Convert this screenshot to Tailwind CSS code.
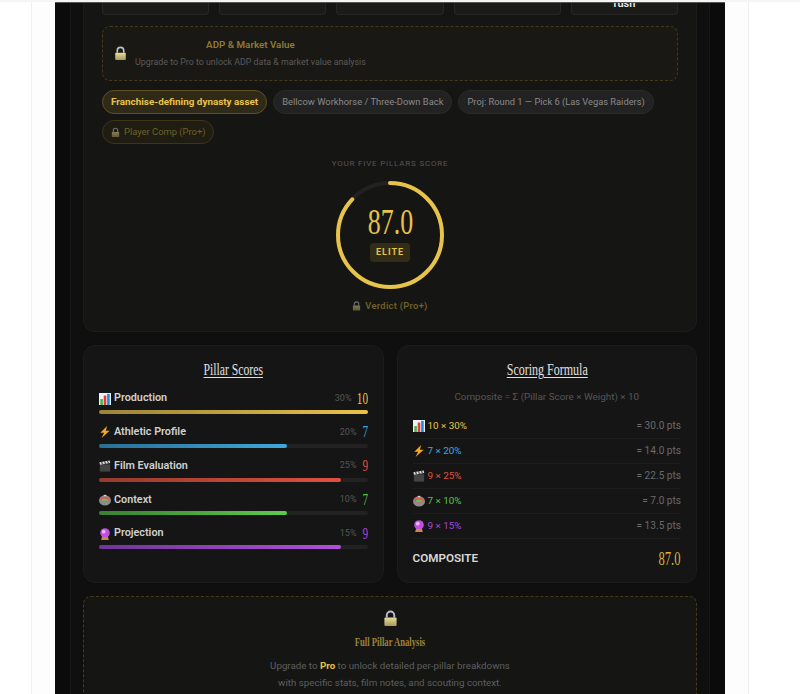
<!DOCTYPE html>
<html lang="en">
  <head>
    <meta charset="UTF-8" />
    <title>Five Pillars Score</title>
    <script src="https://cdn.jsdelivr.net/npm/@tailwindcss/browser@4"></script>
  </head>
  <body class="bg-white font-['Roboto','Liberation_Sans',sans-serif] overflow-hidden">
    <svg class="absolute h-0 w-0">
      <defs>
        <linearGradient id="lockBody" x1="0" y1="0" x2="0" y2="1">
          <stop offset="0" stop-color="#e8dc9c" />
          <stop offset="1" stop-color="#a89a58" />
        </linearGradient>
        <symbol id="lock" viewBox="0 0 16 18">
          <path d="M4 8V5.5a4 4 0 0 1 8 0V8" fill="none" stroke="#b9c2cc" stroke-width="2" />
          <rect x="1.5" y="8" width="13" height="9" rx="1" fill="url(#lockBody)" />
        </symbol>
        <symbol id="chart" viewBox="0 0 14 14">
          <rect width="14" height="14" fill="#eef2f5" />
          <rect x="1.5" y="7" width="3" height="7" fill="#4caf50" />
          <rect x="5.5" y="3" width="3" height="11" fill="#e53935" />
          <rect x="9.5" y="1" width="3" height="13" fill="#1e88e5" />
        </symbol>
        <symbol id="bolt" viewBox="0 0 14 14">
          <path d="M9.5 0 1.5 8h4.5l-3 6 9.5-8.5H8z" fill="#f5a623" />
        </symbol>
        <symbol id="clapper" viewBox="0 0 14 14">
          <rect x="1" y="5" width="12" height="8.5" fill="#444" />
          <path d="m0.5 2.5 12-2 .6 3-12 2z" fill="#ddd" />
          <path d="m3 2 1 3M6.5 1.5l1 3M10 1l1 3" stroke="#333" stroke-width="1.2" />
        </symbol>
        <symbol id="stadium" viewBox="0 0 14 14">
          <ellipse cx="7" cy="7.5" rx="7" ry="6" fill="#8d8d8d" />
          <ellipse cx="7" cy="6" rx="5.4" ry="2.8" fill="#e05a4e" />
          <ellipse cx="7" cy="7" rx="3.8" ry="1.5" fill="#66bb6a" />
          <rect x="5.5" y="1" width="3" height="1.5" fill="#d8d8d8" />
        </symbol>
        <symbol id="ball" viewBox="0 0 14 14">
          <circle cx="7" cy="5.8" r="5.6" fill="#c04fdc" />
          <circle cx="5.5" cy="4.3" r="2.2" fill="#eeb0ff" />
          <path d="M3.5 10.5h7l1 3.5h-9z" fill="#c98a3a" />
        </symbol>
      </defs>
    </svg>

    <!-- outer page -->
    <div class="h-[694px] overflow-hidden border-t-2 border-[#f5f5f5] pl-[31px]">
      <div class="h-full w-[718px] border-x border-[#efefef] bg-[#fdfdfd] px-[23px]">
        <!-- dark frame -->
        <div class="h-full w-[670px] border-t border-[#555] bg-[#0b0b0b] px-[15px]">
          <div class="h-full border-x border-[#171717] bg-[#0f0f0f] px-[12px]">
            <div class="w-[614px]">
              <!-- score card -->
              <div class="h-[329px] rounded-b-xl border border-t-0 border-[#1c1c1c] bg-[#151514] px-[18px]">
                <div class="grid grid-cols-5 gap-[10px]">
                  <div class="h-[12px] rounded-b border border-t-0 border-[#272727] bg-[#1b1b1a]"></div>
                  <div class="h-[12px] rounded-b border border-t-0 border-[#272727] bg-[#1b1b1a]"></div>
                  <div class="h-[12px] rounded-b border border-t-0 border-[#272727] bg-[#1b1b1a]"></div>
                  <div class="h-[12px] rounded-b border border-t-0 border-[#272727] bg-[#1b1b1a]"></div>
                  <div class="h-[12px] overflow-hidden rounded-b border border-t-0 border-[#272727] bg-[#1b1b1a] text-center text-[11px] leading-[2px] font-semibold text-[#e8e8e8]">rush</div>
                </div>

                <!-- ADP lock -->
                <div class="mt-[11px] flex h-[55px] items-center rounded-lg border border-dashed border-[#443a1b] bg-[#191814] pl-[11px]">
                  <svg class="h-[15px] w-[13px] shrink-0"><use href="#lock" /></svg>
                  <div class="ml-[8px] text-center">
                    <div class="text-[9.8px] leading-4 font-semibold text-[#8f7a34]">ADP &amp; Market Value</div>
                    <div class="mt-px text-[8.85px] leading-4 text-[#5a5a5a]">Upgrade to Pro to unlock ADP data &amp; market value analysis</div>
                  </div>
                </div>

                <!-- tags -->
                <div class="mt-[9px] flex flex-wrap gap-x-[6px] gap-y-[6px] text-[9.4px] leading-[22px]">
                  <span class="rounded-full border border-[#5e5022] bg-[#2f2a18] px-2 text-[9.9px] font-bold text-[#e8c34a]">Franchise-defining dynasty asset</span>
                  <span class="rounded-full border border-[#2a2a2a] bg-[#222] px-2 text-[#8a8a8a]">Bellcow Workhorse / Three-Down Back</span>
                  <span class="rounded-full border border-[#2a2a2a] bg-[#222] px-2 text-[9.3px] text-[#8a8a8a]">Proj: Round 1 — Pick 6 (Las Vegas Raiders)</span>
                  <span class="flex items-center gap-1 rounded-full border border-[#3d3518] bg-[#1f1c12] px-2 text-[#6f6128]">
                    <svg class="h-[11px] w-[9px] opacity-50"><use href="#lock" /></svg>Player Comp (Pro+)
                  </span>
                </div>

                <!-- ring -->
                <div class="mt-[14px] text-center text-[8px] leading-3 tracking-[0.8px] text-[#555]">YOUR FIVE PILLARS SCORE</div>
                <div class="relative mx-auto mt-[11px] h-[108px] w-[108px]">
                  <svg class="absolute inset-0 -rotate-90" viewBox="0 0 108 108">
                    <circle cx="54" cy="54" r="52" fill="none" stroke="#222" stroke-width="4" />
                    <circle cx="54" cy="54" r="52" fill="none" stroke="#e8c34a" stroke-width="4" stroke-linecap="round" stroke-dasharray="284 327" />
                  </svg>
                  <div class="absolute inset-0 flex flex-col items-center pt-[21px]">
                    <div class="scale-x-[0.72] font-['Liberation_Serif',serif] text-[36px] leading-10 text-[#e8c34a]">87.0</div>
                    <div class="mt-[1px] rounded-sm bg-[#332c16] px-[6px] text-[9px] leading-[19px] font-bold tracking-[1px] text-[#e8c34a]">ELITE</div>
                  </div>
                </div>
                <div class="mt-[11px] flex items-center justify-center gap-1 text-[9.3px] leading-3 font-semibold tracking-[0.3px] text-[#6f6128]">
                  <svg class="h-[10px] w-[9px] opacity-50"><use href="#lock" /></svg>Verdict (Pro+)
                </div>
              </div>

              <!-- two columns -->
              <div class="mt-[13px] grid h-[238px] grid-cols-2 gap-[13px]">
                <div class="rounded-xl border border-[#1c1c1c] bg-[#151515] px-[15px]">
                  <h3 class="mt-[14px] scale-x-[0.73] text-center font-['Liberation_Serif',serif] text-[16px] leading-5 text-[#e0e0e0] underline underline-offset-2">Pillar Scores</h3>
                  <div class="mt-[9px] flex flex-col gap-[8.75px]">
                    <div>
                      <div class="flex h-[19px] items-center text-[10.8px] font-semibold text-[#d0d0d0]">
                        <svg class="mr-[3px] h-[12px] w-[12px]"><use href="#chart" /></svg>Production
                        <span class="ml-auto text-[9px] font-normal text-[#555]">30%</span>
                        <span class="w-[16px] origin-right scale-x-[0.7] text-right font-['Liberation_Serif',serif] text-[16px] font-normal text-[#e8c34a]">10</span>
                      </div>
                      <div class="mt-[2px] h-[4px] rounded-full bg-[#222]"><div class="h-full rounded-full bg-gradient-to-r from-[#9c8338] to-[#e8c34a]" style="width: 100%"></div></div>
                    </div>
                    <div>
                      <div class="flex h-[19px] items-center text-[10.8px] font-semibold text-[#d0d0d0]">
                        <svg class="mr-[3px] h-[12px] w-[12px]"><use href="#bolt" /></svg>Athletic Profile
                        <span class="ml-auto text-[9px] font-normal text-[#555]">20%</span>
                        <span class="ml-[3px] w-[8px] origin-right scale-x-[0.7] text-right font-['Liberation_Serif',serif] text-[16px] font-normal text-[#3ea8dc]">7</span>
                      </div>
                      <div class="mt-[2px] h-[4px] rounded-full bg-[#222]"><div class="h-full rounded-full bg-gradient-to-r from-[#2a6f94] to-[#3ea8dc]" style="width: 70%"></div></div>
                    </div>
                    <div>
                      <div class="flex h-[19px] items-center text-[10.8px] font-semibold text-[#d0d0d0]">
                        <svg class="mr-[3px] h-[12px] w-[12px]"><use href="#clapper" /></svg>Film Evaluation
                        <span class="ml-auto text-[9px] font-normal text-[#555]">25%</span>
                        <span class="ml-[3px] w-[8px] origin-right scale-x-[0.7] text-right font-['Liberation_Serif',serif] text-[16px] font-normal text-[#e0503f]">9</span>
                      </div>
                      <div class="mt-[2px] h-[4px] rounded-full bg-[#222]"><div class="h-full rounded-full bg-gradient-to-r from-[#96392e] to-[#e0503f]" style="width: 90%"></div></div>
                    </div>
                    <div>
                      <div class="flex h-[19px] items-center text-[10.8px] font-semibold text-[#d0d0d0]">
                        <svg class="mr-[3px] h-[12px] w-[12px]"><use href="#stadium" /></svg>Context
                        <span class="ml-auto text-[9px] font-normal text-[#555]">10%</span>
                        <span class="ml-[3px] w-[8px] origin-right scale-x-[0.7] text-right font-['Liberation_Serif',serif] text-[16px] font-normal text-[#55c244]">7</span>
                      </div>
                      <div class="mt-[2px] h-[4px] rounded-full bg-[#222]"><div class="h-full rounded-full bg-gradient-to-r from-[#3a8030] to-[#5ccc4c]" style="width: 70%"></div></div>
                    </div>
                    <div>
                      <div class="flex h-[19px] items-center text-[10.8px] font-semibold text-[#d0d0d0]">
                        <svg class="mr-[3px] h-[12px] w-[12px]"><use href="#ball" /></svg>Projection
                        <span class="ml-auto text-[9px] font-normal text-[#555]">15%</span>
                        <span class="ml-[3px] w-[8px] origin-right scale-x-[0.7] text-right font-['Liberation_Serif',serif] text-[16px] font-normal text-[#a845d8]">9</span>
                      </div>
                      <div class="mt-[2px] h-[4px] rounded-full bg-[#222]"><div class="h-full rounded-full bg-gradient-to-r from-[#71359a] to-[#b14fdc]" style="width: 90%"></div></div>
                    </div>
                  </div>
                </div>

                <div class="rounded-xl border border-[#1c1c1c] bg-[#151515] px-[15px]">
                  <h3 class="mt-[14px] scale-x-[0.75] text-center font-['Liberation_Serif',serif] text-[16px] leading-5 text-[#e0e0e0] underline underline-offset-2">Scoring Formula</h3>
                  <div class="mt-[9px] text-center text-[9.9px] leading-4 text-[#555]">Composite = Σ (Pillar Score × Weight) × 10</div>
                  <div class="mt-[9px] text-[9.9px]">
                    <div class="flex h-[25px] items-center border-b border-[#1d1d1d]">
                      <svg class="mr-[3px] h-[12px] w-[12px]"><use href="#chart" /></svg><span class="text-[#e8c34a]">10 × 30%</span>
                      <span class="ml-auto text-[10.1px] text-[#6a6a6a]">= 30.0 pts</span>
                    </div>
                    <div class="flex h-[25px] items-center border-b border-[#1d1d1d]">
                      <svg class="mr-[3px] h-[12px] w-[12px]"><use href="#bolt" /></svg><span class="text-[#3ea8dc]">7 × 20%</span>
                      <span class="ml-auto text-[10.1px] text-[#6a6a6a]">= 14.0 pts</span>
                    </div>
                    <div class="flex h-[25px] items-center border-b border-[#1d1d1d]">
                      <svg class="mr-[3px] h-[12px] w-[12px]"><use href="#clapper" /></svg><span class="text-[#e0503f]">9 × 25%</span>
                      <span class="ml-auto text-[10.1px] text-[#6a6a6a]">= 22.5 pts</span>
                    </div>
                    <div class="flex h-[25px] items-center border-b border-[#1d1d1d]">
                      <svg class="mr-[3px] h-[12px] w-[12px]"><use href="#stadium" /></svg><span class="text-[#55c244]">7 × 10%</span>
                      <span class="ml-auto text-[10.1px] text-[#6a6a6a]">= 7.0 pts</span>
                    </div>
                    <div class="flex h-[25px] items-center border-b border-[#1d1d1d]">
                      <svg class="mr-[3px] h-[12px] w-[12px]"><use href="#ball" /></svg><span class="text-[#a845d8]">9 × 15%</span>
                      <span class="ml-auto text-[10.1px] text-[#6a6a6a]">= 13.5 pts</span>
                    </div>
                  </div>
                  <div class="mt-[8px] flex h-[24px] items-center justify-between pr-px">
                    <span class="text-[11.7px] font-semibold text-[#d8d8d8]">COMPOSITE</span>
                    <span class="origin-right scale-x-[0.7] font-['Liberation_Serif',serif] text-[18px] text-[#d9b443]">87.0</span>
                  </div>
                </div>
              </div>

              <!-- locked analysis -->
              <div class="mt-[13px] h-[120px] rounded-lg border border-dashed border-[#443a1b] bg-[#151514] pt-[13px] text-center">
                <svg class="mx-auto h-[17px] w-[15px]"><use href="#lock" /></svg>
                <div class="mt-[5px] scale-x-[0.72] font-['Liberation_Serif',serif] text-[12px] leading-5 font-semibold text-[#9c8338]">Full Pillar Analysis</div>
                <p class="mt-[5px] text-[9.75px] leading-[17px] text-[#5f5f5f]">
                  Upgrade to <b class="text-[#e8c34a]">Pro</b> to unlock detailed per-pillar breakdowns<br />with specific stats, film notes, and scouting context.
                </p>
              </div>
            </div>
          </div>
        </div>
      </div>
    </div>
  </body>
</html>
